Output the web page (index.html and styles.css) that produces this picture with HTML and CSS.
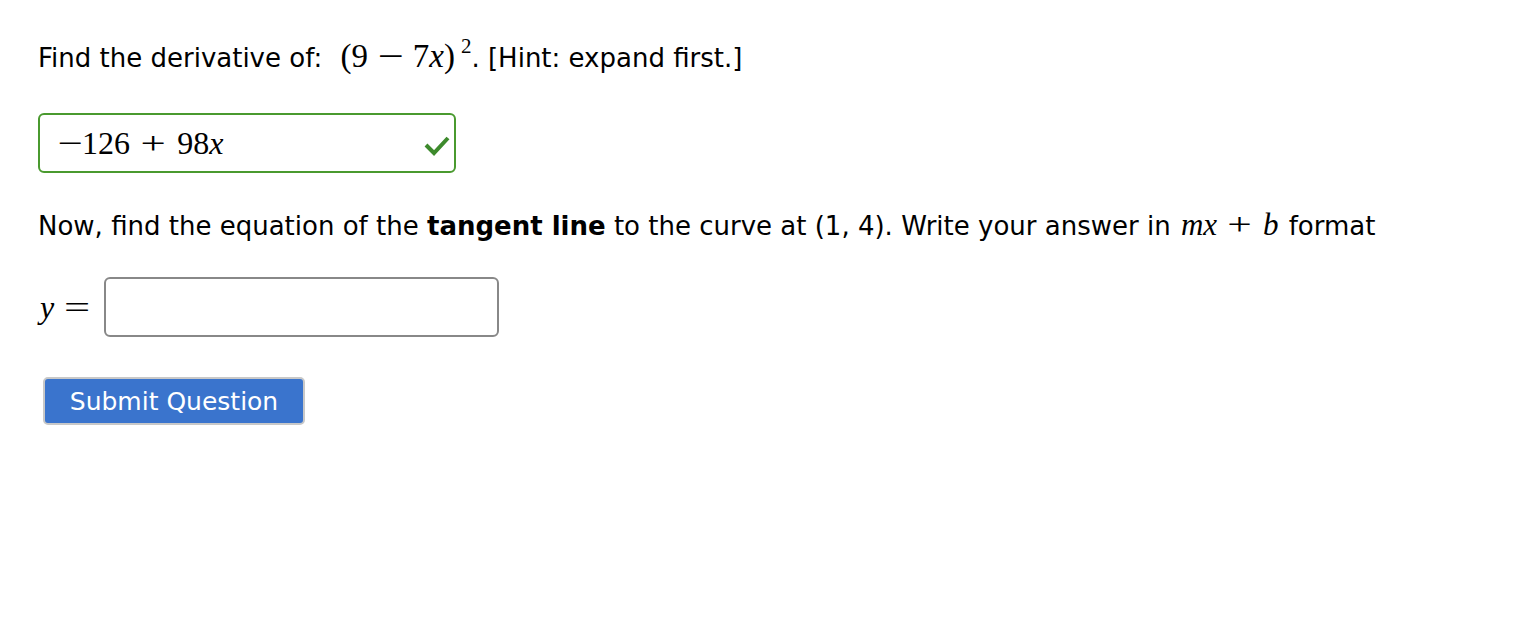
FILE: index.html
```html
<!DOCTYPE html>
<html lang="en">
<head>
    <meta charset="UTF-8">
    <title>Question</title>
    <link rel="stylesheet" href="styles.css">
</head>
<body>
    <div class="question">
        <p class="prompt">Find the derivative of: <span class="math lead">(9<span class="op">&minus;</span>7<i>x</i>)<sup>2</sup></span>. [Hint: expand first.]</p>

        <div class="answer correct">
            <span class="math big"><span class="neg">&minus;</span>126<span class="op">+</span>98<i>x</i></span>
            <svg class="check" viewBox="0 0 28 22" width="28" height="22">
                <path d="M3 11 L11 19 L25 4" fill="none" stroke="#3d8a2c" stroke-width="4"/>
            </svg>
        </div>

        <p class="prompt">Now, find the equation of the <b>tangent line</b> to the curve at (1, 4). Write your answer in <span class="math"><i>mx</i><span class="op">+</span><i>b</i></span> format</p>

        <div class="answer-row">
            <span class="math big"><i>y</i><span class="rel">=</span></span>
            <div class="answer empty"></div>
        </div>

        <button class="submit">Submit Question</button>
    </div>
</body>
</html>
```

FILE: styles.css
```css
body {
    margin: 0;
    background: #fff;
    color: #000;
    font-family: "DejaVu Sans", sans-serif;
    font-size: 26px;
}
.question {
    padding: 38px 0 0 38px;
}
.prompt {
    margin: 0;
    line-height: 40px;
}
.math {
    font-family: "Liberation Serif", serif;
    font-size: 31px;
    line-height: 1;
    margin: 0 2px;
}
.math.lead {
    font-size: 33px;
    margin: 0 0 0 10px;
}
.math i {
    font-style: italic;
}
.math sup {
    font-size: 21px;
    vertical-align: 14px;
    line-height: 0;
    margin-left: 6px;
}
.op {
    display: inline-block;
    width: 1.2em;
    margin: 0 0.14em;
    text-align: center;
    transform: scaleX(1.4);
}
.lead .op {
    margin: 0 0.08em;
}
.rel {
    display: inline-block;
    width: 1.2em;
    margin-left: 0.12em;
    text-align: center;
    transform: scaleX(1.45);
}
.neg {
    display: inline-block;
    width: 0.75em;
    text-align: center;
    transform: scaleX(1.4);
}
.big {
    font-size: 32px;
}
.answer {
    box-sizing: border-box;
    border: 2px solid #888;
    border-radius: 6px;
    height: 60px;
    display: flex;
    align-items: center;
    justify-content: space-between;
    padding: 0 3px 0 16px;
}
.answer.correct {
    border-color: #4a9a2f;
    width: 418px;
    margin: 35px 0 33px;
}
.check {
    margin-top: 4px;
}
.answer-row {
    display: flex;
    align-items: center;
    gap: 6px;
    margin-top: 31px;
}
.answer.empty {
    width: 395px;
}
.submit {
    margin: 40px 0 0 5px;
    width: 262px;
    height: 48px;
    background: #3a74cd;
    color: #fff;
    border: 2px solid #c8c8c8;
    border-radius: 5px;
    font-family: "DejaVu Sans", sans-serif;
    font-size: 25px;
    cursor: pointer;
}
```
